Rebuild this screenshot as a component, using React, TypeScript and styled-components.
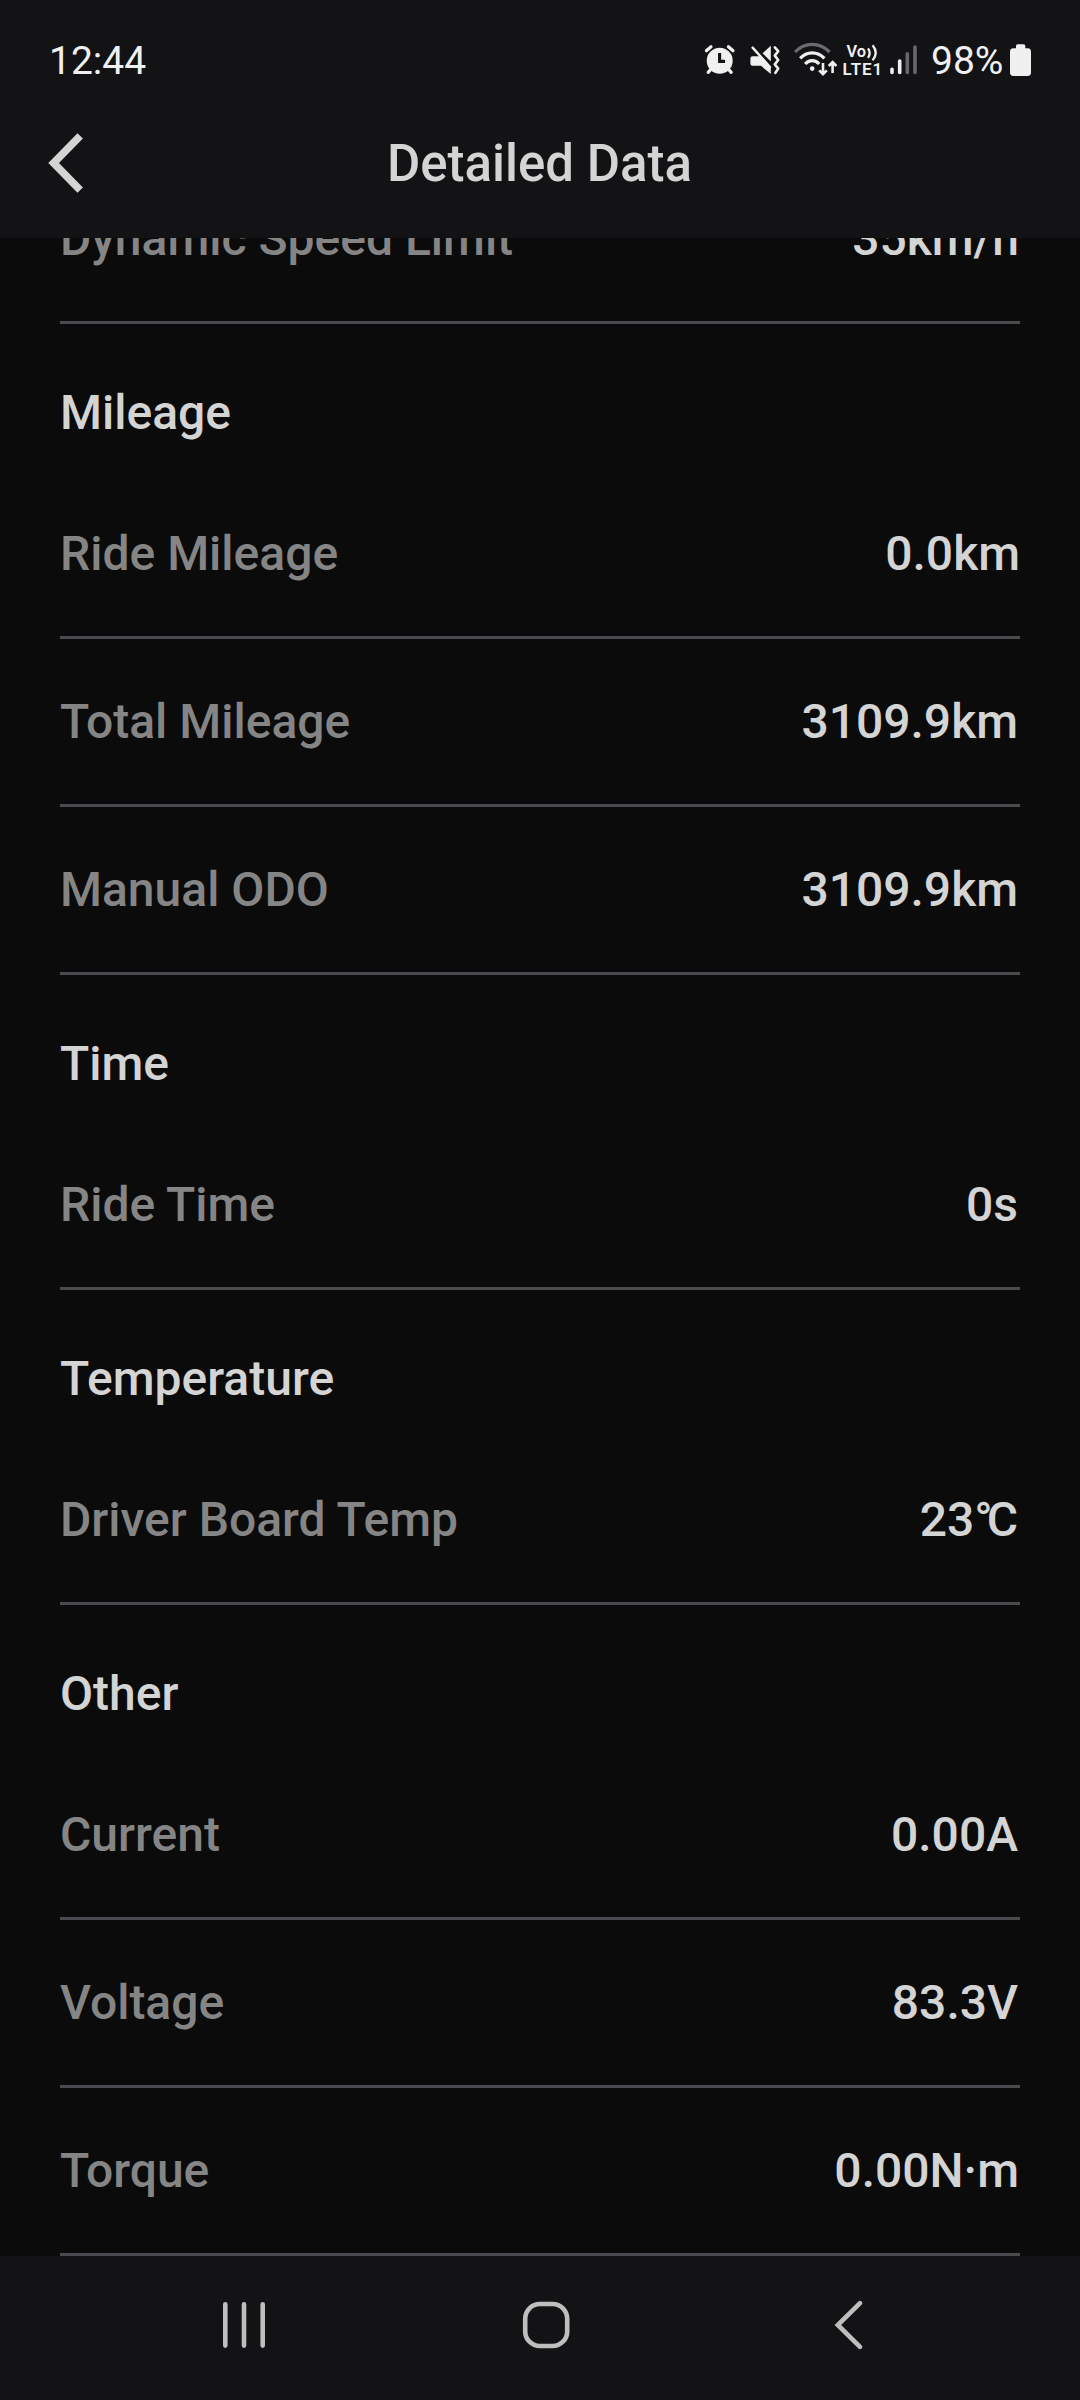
import React from "react";
import styled, { createGlobalStyle } from "styled-components";

const GlobalStyle = createGlobalStyle`
  html, body { margin: 0; background: #0b0b0b; }
  * { box-sizing: border-box; }
`;

const Screen = styled.div`
  width: 1080px;
  height: 2400px;
  display: flex;
  flex-direction: column;
  background: #0b0b0b;
  font-family: Roboto, "Liberation Sans", sans-serif;
  overflow: hidden;
`;

const Header = styled.header`
  flex: 0 0 238px;
  display: flex;
  flex-direction: column;
  background: #131315;
`;

const StatusBar = styled.div`
  height: 88px;
  padding: 32px 48px 0 49px;
  display: flex;
  align-items: flex-start;
  color: #f0f0f0;
`;

const StatusText = styled.span`
  height: 59px;
  line-height: 59px;
  font-size: 39px;
`;

const StatusIcons = styled.div`
  margin-left: auto;
  display: flex;
  align-items: flex-start;
`;

const StatusIcon = styled.svg<{ $gap?: number }>`
  display: block;
  height: 40px;
  margin-top: 8px;
  margin-right: ${(p) => p.$gap ?? 0}px;
`;

const PercentText = styled(StatusText)`
  width: 76px;
  margin-right: 2px;
  white-space: nowrap;
`;

const AppBar = styled.div`
  height: 150px;
  padding: 0 44px;
  display: grid;
  grid-template-columns: 60px 1fr 60px;
  align-items: center;
`;

const BackButton = styled.button`
  padding: 0;
  border: 0;
  background: none;
  display: flex;
`;

const Title = styled.h1`
  margin: 0;
  padding: 2px 1px 0 0;
  text-align: center;
  color: #d4d4d4;
  font-size: 51px;
  font-weight: 500;
  line-height: 60px;
`;

const Content = styled.main`
  flex: 1 1 0;
  min-height: 0;
  padding: 0 60px;
  display: flex;
  flex-direction: column;
  justify-content: flex-end;
  overflow: hidden;
`;

const Section = styled.section`
  flex: none;
`;

const SectionTitle = styled.h2`
  margin: 0;
  height: 147px;
  padding-top: 30px;
  display: flex;
  align-items: center;
  color: #d4d4d4;
  font-size: 48px;
  font-weight: 500;
`;

const Row = styled.div`
  height: 168px;
  display: flex;
  align-items: center;
  justify-content: space-between;
  border-bottom: 3px solid #4b4b4f;
  font-size: 48px;
  font-weight: 500;
`;

const Label = styled.span`
  color: #858585;
`;

const Value = styled.span<{ $inset: number }>`
  padding-right: ${(p) => p.$inset}px;
  color: #d4d4d4;
`;

const Degree = styled.span`
  letter-spacing: -6px;
`;

const NavBar = styled.nav`
  flex: 0 0 144px;
  padding: 0 81px 6px 93px;
  display: grid;
  grid-template-columns: repeat(3, 1fr);
  align-items: center;
  justify-items: center;
  background: #131315;
`;

const NavIcon = styled.svg`
  display: block;
  width: 60px;
  height: 60px;
  fill: none;
  stroke: #bebebe;
  stroke-width: 4.6;
  stroke-linecap: round;
`;

type Item = { label: string; value: React.ReactNode; inset: number };
type Group = { title?: string; items: Item[] };

const groups: Group[] = [
  { items: [{ label: "Dynamic Speed Limit", value: "35km/h", inset: 1 }] },
  {
    title: "Mileage",
    items: [
      { label: "Ride Mileage", value: "0.0km", inset: 0 },
      { label: "Total Mileage", value: "3109.9km", inset: 2 },
      { label: "Manual ODO", value: "3109.9km", inset: 2 },
    ],
  },
  { title: "Time", items: [{ label: "Ride Time", value: "0s", inset: 2 }] },
  {
    title: "Temperature",
    items: [{ label: "Driver Board Temp", value: <>23<Degree>°</Degree>C</>, inset: 2 }],
  },
  {
    title: "Other",
    items: [
      { label: "Current", value: "0.00A", inset: 2 },
      { label: "Voltage", value: "83.3V", inset: 2 },
      { label: "Torque", value: "0.00N·m", inset: 1 },
    ],
  },
];

const AlarmIcon = () => (
  <StatusIcon width="32" viewBox="0 0 32 40" $gap={12}>
    <circle cx="15.7" cy="20.8" r="13" fill="#f0f0f0" />
    <g stroke="#f0f0f0" strokeWidth="3.2" strokeLinecap="round">
      <path d="M2.4 10.8L7 6.8M29 10.8L24.4 6.8" />
      <path d="M4.2 32.4L8 28M27.2 32.4L23.4 28" />
    </g>
    <path d="M15.6 13V21.4H21" fill="none" stroke="#131315" strokeWidth="3.1" />
  </StatusIcon>
);

const MuteVibrateIcon = () => (
  <StatusIcon width="34" viewBox="0 0 34 40" $gap={10}>
    <g fill="#f0f0f0">
      <path d="M4.5 16.3H12.4L22.8 28V34L13 25.8H4.5Q2.4 25.8 2.4 23.7V18.4Q2.4 16.3 4.5 16.3Z" />
      <path d="M14.6 13.2L22.8 5.8V21.6Z" />
    </g>
    <g fill="none" stroke="#f0f0f0" strokeLinecap="round" strokeLinejoin="round">
      <path d="M4.6 7.6L22 27" strokeWidth="2.4" />
      <path d="M26.8 7.4L30.2 11.2L26.8 15.6L30.2 20L26.8 24.4L30.2 28.6L27.4 32.8" strokeWidth="2.6" />
    </g>
  </StatusIcon>
);

const WifiIcon = () => (
  <StatusIcon width="48" viewBox="0 0 48 40" $gap={2} fill="none" strokeWidth="3.2">
    <path d="M3 12Q10.5 4.4 20.2 4.4T37.6 12" stroke="#6c6c6e" />
    <g stroke="#f0f0f0">
      <path d="M8.2 18.4Q13.2 12.8 20.2 12.8T32.4 18.4" />
      <path d="M13.2 24Q16 20.6 20.2 20.6T27.2 24" />
      <path d="M31 23V34M27.2 30.4L31 34.2L34.8 30.4M40.6 33V22.4M36.8 26L40.6 22.2L44.4 26" strokeWidth="2.6" />
    </g>
    <circle cx="20.2" cy="28.6" r="2.3" fill="#f0f0f0" />
  </StatusIcon>
);

const VoLteIcon = () => (
  <StatusIcon width="40" viewBox="0 0 40 40" $gap={7}>
    <g fill="#f0f0f0" fontSize="16.4" fontWeight="600">
      <text x="4.6" y="17.3">Vo</text>
      <text x="0.6" y="35.2" fontSize="17" letterSpacing="0.9">LTE1</text>
    </g>
    <g fill="none" stroke="#f0f0f0" strokeWidth="2.3">
      <path d="M26 8.4Q29.4 12.8 26 17.8" />
      <path d="M30.6 5.2Q36.8 12.6 30.6 20.4" />
    </g>
  </StatusIcon>
);

const SignalIcon = () => (
  <StatusIcon width="29" viewBox="0 0 29 40" $gap={13} strokeWidth="3.6" strokeLinecap="round">
    <path d="M3 29.2V32.4M10.7 21V32.4" stroke="#f0f0f0" />
    <path d="M18.3 13.8V32.4M26 7V32.4" stroke="#68686a" />
  </StatusIcon>
);

const BatteryIcon = () => (
  <StatusIcon width="23" viewBox="0 0 23 40" fill="#f0f0f0">
    <rect x="1" y="8.3" width="21" height="27.6" rx="3.4" />
    <rect x="7" y="4.3" width="9.3" height="8" rx="1.6" />
  </StatusIcon>
);

export default function App() {
  return (
    <Screen>
      <GlobalStyle />
      <Header>
        <StatusBar>
          <StatusText>12:44</StatusText>
          <StatusIcons>
            <AlarmIcon />
            <MuteVibrateIcon />
            <WifiIcon />
            <VoLteIcon />
            <SignalIcon />
            <PercentText>98%</PercentText>
            <BatteryIcon />
          </StatusIcons>
        </StatusBar>
        <AppBar>
          <BackButton aria-label="Back">
            <svg width="60" height="70" viewBox="0 0 60 70" fill="none" stroke="#d4d4d4" strokeWidth="7.6">
              <path d="M36.2 7.8L9.6 35L36.2 62.2" />
            </svg>
          </BackButton>
          <Title>Detailed Data</Title>
        </AppBar>
      </Header>
      <Content>
        {groups.map((group, i) => (
          <Section key={i}>
            {group.title && <SectionTitle>{group.title}</SectionTitle>}
            {group.items.map((item) => (
              <Row key={item.label}>
                <Label>{item.label}</Label>
                <Value $inset={item.inset}>{item.value}</Value>
              </Row>
            ))}
          </Section>
        ))}
      </Content>
      <NavBar>
        <NavIcon viewBox="0 0 60 60">
          <path d="M11.3 9.4V50.6M30 9.4V50.6M48.7 9.4V50.6" />
        </NavIcon>
        <NavIcon viewBox="0 0 60 60">
          <rect x="9.2" y="9" width="42" height="42" rx="14.6" />
        </NavIcon>
        <NavIcon viewBox="0 0 60 60">
          <path d="M42 8.2L19.8 30L42 51.8" />
        </NavIcon>
      </NavBar>
    </Screen>
  );
}
